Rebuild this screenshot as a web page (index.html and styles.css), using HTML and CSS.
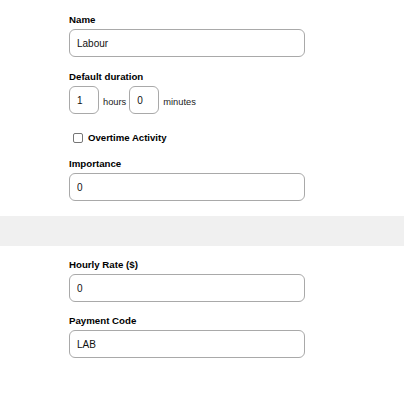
FILE: index.html
```html
<!DOCTYPE html>
<html>
<head>
<meta charset="utf-8">
<link rel="stylesheet" href="styles.css">
</head>
<body>
<section class="section top">
  <div class="field">
    <label class="label">Name</label>
    <input class="input" type="text" value="Labour">
  </div>
  <div class="field gap">
    <label class="label">Default duration</label>
    <div class="duration">
      <input class="input small" type="text" value="1">
      <span class="unit">hours</span>
      <input class="input small" type="text" value="0">
      <span class="unit">minutes</span>
    </div>
  </div>
  <label class="check">
    <input class="box" type="checkbox">
    <span>Overtime Activity</span>
  </label>
  <div class="field gap2">
    <label class="label">Importance</label>
    <input class="input" type="text" value="0">
  </div>
</section>
<div class="band"></div>
<section class="section bottom">
  <div class="field">
    <label class="label">Hourly Rate ($)</label>
    <input class="input" type="text" value="0">
  </div>
  <div class="field gap3">
    <label class="label">Payment Code</label>
    <input class="input" type="text" value="LAB">
  </div>
</section>
</body>
</html>
```
FILE: styles.css
```css
html, body {
  margin: 0;
  padding: 0;
  background: #ffffff;
}
body {
  font-family: "Liberation Sans", Arial, sans-serif;
  color: #000;
  width: 404px;
  height: 404px;
  overflow: hidden;
}
.section {
  padding-left: 69px;
  width: 236px;
}
.top {
  padding-top: 14px;
  padding-bottom: 15px;
}
.bottom {
  padding-top: 13px;
}
.field {
  display: flex;
  flex-direction: column;
}
.gap { margin-top: 14px; }
.gap2 { margin-top: 14px; }
.gap3 { margin-top: 13px; }
.label {
  font-size: 9.7px;
  font-weight: bold;
  line-height: 12px;
  margin-bottom: 3px;
  color: #000;
}
.input {
  box-sizing: border-box;
  width: 236px;
  height: 28px;
  margin: 0;
  padding: 0 7px;
  border: 1px solid #a9a9a9;
  border-radius: 6px;
  font-family: "Liberation Sans", Arial, sans-serif;
  font-size: 10px;
  color: #111;
  background: #fff;
  outline: none;
}
.duration {
  display: flex;
  align-items: center;
}
.input.small {
  width: 30px;
}
.unit {
  font-size: 9.3px;
  color: #222;
  margin: 3px 3px 0 4px;
}
.check {
  display: flex;
  align-items: center;
  margin-top: 17px;
  height: 13px;
  font-size: 9.6px;
  font-weight: bold;
  line-height: 13px;
}
.box {
  appearance: none;
  -webkit-appearance: none;
  box-sizing: border-box;
  width: 10px;
  height: 10px;
  margin: 0 5px 0 4px;
  border: 1px solid #767676;
  border-radius: 2px;
  background: #fff;
}
.band {
  height: 30px;
  background: #f0f0f0;
}
```
